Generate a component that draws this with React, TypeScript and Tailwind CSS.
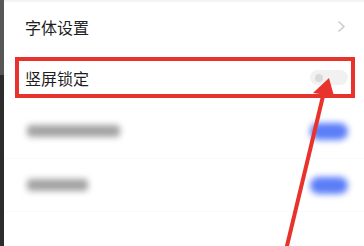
const font = { fontFamily: '"Noto Sans CJK SC", "Noto Sans", sans-serif' }

function Toggle({ on }: { on: boolean }) {
  if (on) {
    return <div className="w-[38px] h-[17px] rounded-full bg-[#5b7ef8] blur-[3px]" />
  }
  return (
    <div className="w-[38px] h-[15px] rounded-full bg-[#f1f1f1] flex items-center pl-[5px] blur-[0.6px]">
      <div className="w-[8px] h-[8px] rounded-full bg-[#dadada]" />
    </div>
  )
}

export default function App() {
  return (
    <div className="relative w-[364px] h-[246px] overflow-hidden bg-white flex" style={font}>
      <div className="w-[4px] flex flex-col shrink-0">
        <div className="h-[75px] bg-[#575757]" />
        <div className="flex-1 bg-[#2c2c2c]" />
      </div>
      <div className="flex-1 flex flex-col">
        <div className="h-[53px] flex items-center justify-between pl-[21px] pr-[18px] pb-[2px] border-t-[2px] border-[#f4f4f4]">
          <span className="text-[16px] text-[#1e1e1e] leading-none">字体设置</span>
          <svg width="9" height="13" viewBox="0 0 9 13" fill="none">
            <path d="M1.5 1.5 L7 6.5 L1.5 11.5" stroke="#c9c9c9" strokeWidth="1.4" />
          </svg>
        </div>
        <div className="h-[53px] pt-[4px] pl-[11px] pr-[9px]">
          <div className="h-[41px] border-[4px] border-[#e8332c] flex items-center justify-between pl-[6px] pr-[3px]">
            <span className="text-[16px] text-[#1e1e1e] leading-none">竖屏锁定</span>
            <Toggle on={false} />
          </div>
        </div>
        <div className="h-[53px] flex items-center justify-between pl-[23px] pr-[16px] pb-[2px] border-b border-[#fafafa]">
          <div className="w-[93px] h-[12px] bg-[#a3a3a3] blur-[3px] rounded-sm" />
          <Toggle on />
        </div>
        <div className="h-[53px] flex items-center justify-between pl-[23px] pr-[16px] border-b border-[#fafafa]">
          <div className="w-[61px] h-[12px] bg-[#a3a3a3] blur-[3px] rounded-sm" />
          <Toggle on />
        </div>
      </div>
      <svg className="absolute inset-0 pointer-events-none" width="364" height="246" viewBox="0 0 364 246">
        <line x1="286" y1="250" x2="324" y2="92" stroke="#e8332c" strokeWidth="4" />
        <polygon points="329,78 313,93 334,96" fill="#e8332c" />
      </svg>
    </div>
  )
}
